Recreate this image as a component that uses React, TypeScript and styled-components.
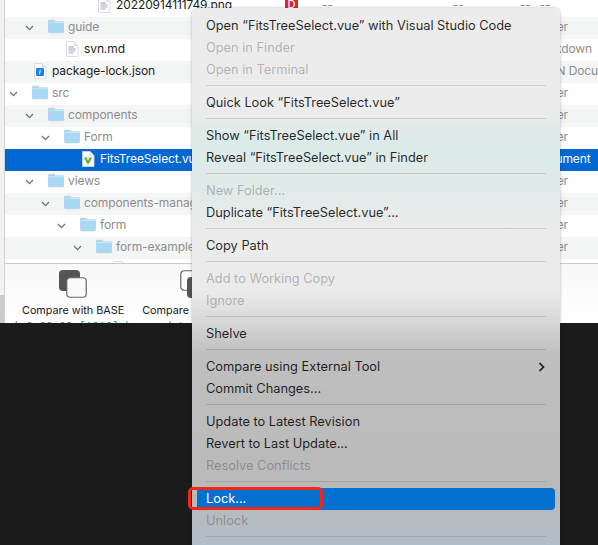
import React from "react";
import styled, { createGlobalStyle } from "styled-components";

type IconKind = "folder" | "png" | "md" | "json" | "vue";

interface ITreeRow {
  name: string;
  depth: number;
  icon: IconKind;
  kind?: string;
  open?: boolean;
  selected?: boolean;
  badge?: string;
}

type MenuEntry = { label: string; disabled?: boolean; active?: boolean; submenu?: boolean } | "sep";

const treeRows: ITreeRow[] = [
  { name: "20220914111749.png", depth: 5, icon: "png", badge: "D" },
  { name: "guide", depth: 2, icon: "folder", open: true, kind: "Folder" },
  { name: "svn.md", depth: 3, icon: "md", kind: "Markdown" },
  { name: "package-lock.json", depth: 1, icon: "json", kind: "JSON Document" },
  { name: "src", depth: 1, icon: "folder", open: true, kind: "Folder" },
  { name: "components", depth: 2, icon: "folder", open: true, kind: "Folder" },
  { name: "Form", depth: 3, icon: "folder", open: true, kind: "Folder" },
  { name: "FitsTreeSelect.vue", depth: 4, icon: "vue", selected: true, kind: "Document" },
  { name: "views", depth: 2, icon: "folder", open: true, kind: "Folder" },
  { name: "components-manage", depth: 3, icon: "folder", open: true, kind: "Folder" },
  { name: "form", depth: 4, icon: "folder", open: true, kind: "Folder" },
  { name: "form-example", depth: 5, icon: "folder", open: true, kind: "Folder" },
  { name: "index.vue", depth: 6, icon: "md" },
];

const menuEntries: MenuEntry[] = [
  { label: "Open “FitsTreeSelect.vue” with Visual Studio Code" },
  { label: "Open in Finder", disabled: true },
  { label: "Open in Terminal", disabled: true },
  "sep",
  { label: "Quick Look “FitsTreeSelect.vue”" },
  "sep",
  { label: "Show “FitsTreeSelect.vue” in All" },
  { label: "Reveal “FitsTreeSelect.vue” in Finder" },
  "sep",
  { label: "New Folder...", disabled: true },
  { label: "Duplicate “FitsTreeSelect.vue”..." },
  "sep",
  { label: "Copy Path" },
  "sep",
  { label: "Add to Working Copy", disabled: true },
  { label: "Ignore", disabled: true },
  "sep",
  { label: "Shelve" },
  "sep",
  { label: "Compare using External Tool", submenu: true },
  { label: "Commit Changes..." },
  "sep",
  { label: "Update to Latest Revision" },
  { label: "Revert to Last Update..." },
  { label: "Resolve Conflicts", disabled: true },
  "sep",
  { label: "Lock...", active: true },
  { label: "Unlock", disabled: true },
  "sep",
];

const GlobalStyle = createGlobalStyle`
  html, body {
    margin: 0;
    padding: 0;
    background: #1b1b1b;
  }
  * {
    box-sizing: border-box;
  }
`;

const Page = styled.div`
  position: relative;
  width: 598px;
  height: 545px;
  overflow: hidden;
  background: #1b1b1b;
  font-family: Inter, "Liberation Sans", sans-serif;
  -webkit-font-smoothing: antialiased;
`;

const Window = styled.div`
  display: flex;
  height: 323px;
  background: #fff;
`;

const Gutter = styled.div`
  flex: 0 0 5px;
  border-right: 1px solid #d2d2d2;
  background: linear-gradient(#f2f2f2 295px, #cbcbcb 295px);
`;

const Main = styled.div`
  flex: 1;
  min-width: 0;
  display: flex;
  flex-direction: column;
`;

const Tree = styled.div`
  height: 263px;
  overflow: hidden;
`;

const TreeList = styled.div`
  margin-top: -5px;
`;

const Row = styled.div<{ $odd: boolean; $selected?: boolean }>`
  display: flex;
  align-items: center;
  height: 22px;
  padding-bottom: 3px;
  font-size: 12px;
  letter-spacing: -0.1px;
  background: ${(p) => (p.$selected ? "#0468d3" : p.$odd ? "#f4f5f5" : "#fff")};
`;

const NameCell = styled.div<{ $depth: number }>`
  flex: 0 0 280px;
  display: flex;
  align-items: center;
  padding-left: ${(p) => (p.$depth - 1) * 16}px;
  white-space: nowrap;
  overflow: hidden;
`;

const Twisty = styled.span`
  flex: 0 0 27px;
  display: flex;
  align-items: center;
  padding: 3px 0 0 4px;
`;

const IconSlot = styled.span`
  flex: 0 0 16px;
  display: flex;
  justify-content: center;
`;

const Name = styled.span<{ $folder: boolean; $selected?: boolean }>`
  margin-left: 4px;
  color: ${(p) => (p.$selected ? "#fff" : p.$folder ? "#8d8d8d" : "#1d1d1d")};
`;

const Badge = styled.span`
  width: 13px;
  height: 13px;
  background: #d02b35;
  color: #fff;
  font-size: 11px;
  line-height: 13px;
  text-align: center;
`;

const Dash = styled.span<{ $gap: number }>`
  margin-left: ${(p) => p.$gap}px;
  color: #8d8d8d;
`;

const Kind = styled.span<{ $selected?: boolean }>`
  flex: 0 0 65px;
  margin-left: auto;
  white-space: nowrap;
  overflow: hidden;
  color: ${(p) => (p.$selected ? "#fff" : "#8d8d8d")};
`;

const Footer = styled.div`
  flex: 1;
  display: flex;
  flex-direction: column;
  border-top: 1px solid #c9c9c9;
  background: linear-gradient(#f8f8f8, #fff);
  overflow: hidden;
`;

const Toolbar = styled.div`
  flex: 1;
  display: flex;
  gap: 18px;
  padding: 6px 0 0 17px;
`;

const ToolButton = styled.div`
  display: flex;
  flex-direction: column;
  align-items: center;
  gap: 6px;
`;

const ToolLabel = styled.span`
  font-size: 10.8px;
  line-height: 14px;
  color: #1a1a1a;
  white-space: nowrap;
`;

const LogPeek = styled.div`
  flex: 0 0 3px;
  display: flex;
  padding-left: 8px;
  overflow: hidden;
  font-family: "Liberation Mono", monospace;
  font-size: 11px;
  line-height: 12px;
  white-space: pre;
`;

const LogText = styled.span<{ $color: string }>`
  color: ${(p) => p.$color};
`;

const Menu = styled.div`
  position: absolute;
  left: 192px;
  top: 8px;
  width: 368px;
  height: 560px;
  padding: 7px 5px;
  border-radius: 6px 6px 0 0;
  box-shadow: 0 0 3px rgba(0, 0, 0, 0.3);
  background: linear-gradient(
    #ececec 0,
    #ececec 100px,
    #dcebe9 130px,
    #dfebea 180px,
    #ebebeb 220px,
    #ebebeb 285px,
    #d6d6d6 315px,
    #bfbfbf 345px,
    #b9b9b9 490px,
    #b5bcc0 512px,
    #afbec9 537px
  );
`;

const Item = styled.div<{ $disabled?: boolean; $active?: boolean }>`
  position: relative;
  display: flex;
  align-items: center;
  justify-content: space-between;
  height: 22px;
  padding: 0 10px 1px 9px;
  border-radius: 4px;
  font-size: 12.8px;
  white-space: nowrap;
  background: ${(p) => (p.$active ? "#0470d0" : "transparent")};
  color: ${(p) => (p.$active ? "#fff" : p.$disabled ? "rgba(0, 0, 0, 0.27)" : "rgba(0, 0, 0, 0.85)")};
`;

const Separator = styled.div`
  height: 1px;
  margin: 4px 9px 6px;
  background: rgba(0, 0, 0, 0.13);
`;

const Annotation = styled.div`
  position: absolute;
  left: -9px;
  top: -1px;
  width: 135px;
  height: 23px;
  border: 3px solid #f2261b;
  border-radius: 5px;
`;

const Chevron = () => (
  <svg width="9" height="6" viewBox="0 0 9 6" fill="none">
    <path d="M1 1l3.5 3.6L8 1" stroke="#6f6f6f" strokeWidth="1.3" />
  </svg>
);

const FolderIcon = () => (
  <svg width="16" height="15" viewBox="0 0 16 15">
    <path
      d="M1.5 1h4.2c.6 0 .9.2 1.3.7l.6.8h6.9c.8 0 1.5.6 1.5 1.4v8.6c0 .8-.7 1.5-1.5 1.5h-12.5C.7 14 0 13.300 0 12.500V2.500C0 1.600.7 1 1.500 1z"
      fill="#a9d8f5"
      stroke="#cfd6db"
      strokeWidth=".6"
    />
    <path d="M0.500 3.600h15" stroke="#c7e7fa" strokeWidth="1" />
  </svg>
);

const PaperIcon = ({ children }: { children: React.ReactNode }) => (
  <svg width="14" height="16" viewBox="0 0 14 16">
    <path d="M1.500.5h7.500l4 4v11h-11.500z" fill="#fff" stroke="#d4d4d4" strokeWidth=".8" />
    <path d="M9 .5v4h4" fill="#e8e8e8" stroke="#d4d4d4" strokeWidth=".6" />
    {children}
  </svg>
);

const FileIcon = ({ kind }: { kind: IconKind }) => {
  if (kind === "folder") return <FolderIcon />;
  if (kind === "json")
    return (
      <PaperIcon>
        <rect x="3" y="5" width="8" height="8" rx="1" fill="#1383e8" />
        <path d="M7.300 6.800l-.8 4.500" stroke="#fff" strokeWidth="1" />
      </PaperIcon>
    );
  if (kind === "vue")
    return (
      <PaperIcon>
        <path d="M2.800 6.500h8.400l-4.200 7.300z" fill="#5aa83a" />
        <path d="M5 6.500h4L7 10z" fill="#d6e9c8" />
      </PaperIcon>
    );
  return (
    <PaperIcon>
      <path d="M3.500 6h5" stroke="#8c9bb5" strokeWidth="1" />
      <path d="M3.500 8h7" stroke="#c38fb0" strokeWidth="1" />
      <path d="M3.500 10h7" stroke="#9bb0cc" strokeWidth="1" />
      <path d="M3.500 12h5" stroke="#a9a9a9" strokeWidth="1" />
    </PaperIcon>
  );
};

const CompareIcon = ({ darkInFront }: { darkInFront?: boolean }) => {
  const dark = <rect x={darkInFront ? 7 : 0} y={darkInFront ? 7 : 0} width="21" height="21" rx="4" fill="#555" />;
  const outline = (
    <rect
      x={darkInFront ? 0.75 : 7.75}
      y={darkInFront ? 0.75 : 7.75}
      width="19.5"
      height="19.5"
      rx="3.5"
      fill="#fbfbfb"
      stroke="#666"
      strokeWidth="1.2"
    />
  );
  return (
    <svg width="28" height="28" viewBox="0 0 28 28">
      {darkInFront ? outline : dark}
      {darkInFront ? dark : outline}
    </svg>
  );
};

const App = () => (
  <Page>
    <GlobalStyle />
    <Window>
      <Gutter />
      <Main>
        <Tree>
          <TreeList>
            {treeRows.map((row, index) => (
              <Row key={row.name} $odd={index % 2 === 1} $selected={row.selected}>
                <NameCell $depth={row.depth}>
                  <Twisty>{row.open && <Chevron />}</Twisty>
                  <IconSlot>
                    <FileIcon kind={row.icon} />
                  </IconSlot>
                  <Name $folder={row.icon === "folder"} $selected={row.selected}>
                    {row.name}
                  </Name>
                </NameCell>
                {row.badge && (
                  <>
                    <Badge>{row.badge}</Badge>
                    <Dash $gap={24}>--</Dash>
                    <Dash $gap={120}>--</Dash>
                    <Dash $gap={56}>--</Dash>
                    <Dash $gap={9}>--</Dash>
                  </>
                )}
                {row.kind && <Kind $selected={row.selected}>{row.kind}</Kind>}
              </Row>
            ))}
          </TreeList>
        </Tree>
        <Footer>
          <Toolbar>
            <ToolButton>
              <CompareIcon />
              <ToolLabel>Compare with BASE</ToolLabel>
            </ToolButton>
            <ToolButton>
              <CompareIcon darkInFront />
              <ToolLabel>Compare with HEAD</ToolLabel>
            </ToolButton>
          </Toolbar>
          <LogPeek>
            <LogText $color="#666">| 2:28:02 </LogText>
            <LogText $color="#0b8fa3">[1216] </LogText>
            <LogText $color="#0aa86e">hmr update</LogText>
            <LogText $color="#777"> /src/views/components-manage/form/form-example/index.vue</LogText>
          </LogPeek>
        </Footer>
      </Main>
    </Window>
    <Menu>
      {menuEntries.map((entry, index) =>
        entry === "sep" ? (
          <Separator key={index} />
        ) : (
          <Item key={index} $disabled={entry.disabled} $active={entry.active}>
            {entry.label}
            {entry.submenu && (
              <svg width="7" height="10" viewBox="0 0 7 10" fill="none">
                <path d="M1.500 1l4 4-4 4" stroke="#1a1a1a" strokeWidth="1.700" />
              </svg>
            )}
            {entry.active && <Annotation />}
          </Item>
        )
      )}
    </Menu>
  </Page>
);

export default App;
